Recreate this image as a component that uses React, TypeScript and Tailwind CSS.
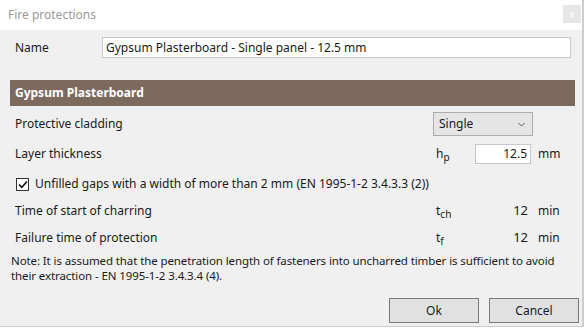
import React from "react";

const font = { fontFamily: '"Noto Sans", "Open Sans", sans-serif' };

function Sym({ base, sub }: { base: string; sub: string }) {
  return (
    <span className="text-[12px] text-[#1a1a1a]">
      {base}
      <span className="relative top-[3px] text-[10px]">{sub}</span>
    </span>
  );
}

export default function App() {
  return (
    <div className="w-[586px] h-[328px] bg-white overflow-hidden" style={font}>
      <div className="w-[584px] h-[327px] bg-[#f0f0f0] border-r-[2px] border-b border-[#cdcdcd] flex flex-col text-[12px] text-[#1a1a1a]">
        {/* Title bar */}
        <div className="h-[30px] bg-white flex items-center justify-between pl-[8px] pr-[1px]">
          <span className="text-[12px] text-[#9a9a9a]">Fire protections</span>
          <div className="w-[18px] h-[18px] bg-[#e6e6e6] flex items-center justify-center text-white text-[10px] leading-none mb-[2px]">
            x
          </div>
        </div>

        {/* Name */}
        <div className="mt-[7px] h-[21px] flex items-center pl-[15px] pr-[11px]">
          <span className="w-[87px]">Name</span>
          <div className="flex-1 h-[21px] bg-white border border-[#c8c8c8] flex items-center pl-[3px]">
            Gypsum Plasterboard - Single panel - 12.5 mm
          </div>
        </div>

        {/* Section header */}
        <div className="mt-[22px] mx-[10px] mr-[7px] h-[26px] bg-[#7d6a5f] flex items-center pl-[5px]">
          <span className="text-white font-bold text-[12px]">Gypsum Plasterboard</span>
        </div>

        {/* Protective cladding */}
        <div className="mt-[6px] h-[24px] flex items-center pl-[15px]">
          <span className="flex-1">Protective cladding</span>
          <div className="w-[149px] flex">
            <div className="w-[100px] h-[24px] bg-[#e5e5e5] border border-[#adadad] flex items-center justify-between pl-[5px] pr-[7px]">
              <span>Single</span>
              <svg width="7" height="5" viewBox="0 0 7 5">
                <path d="M0.5 1 L3.5 4 L6.5 1" stroke="#555" strokeWidth="1" fill="none" />
              </svg>
            </div>
          </div>
        </div>

        {/* Layer thickness */}
        <div className="mt-[8px] h-[20px] flex items-center pl-[15px]">
          <span className="flex-1">Layer thickness</span>
          <div className="w-[149px] flex items-center">
            <div className="w-[42px] pl-[3px]">
              <Sym base="h" sub="p" />
            </div>
            <div className="w-[56px] h-[20px] bg-white border border-[#c8c8c8] flex items-center justify-end pr-[3px]">
              12.5
            </div>
            <span className="ml-[7px]">mm</span>
          </div>
        </div>

        {/* Checkbox */}
        <div className="mt-[10px] h-[20px] flex items-center pl-[16px]">
          <div className="w-[13px] h-[13px] bg-white border border-[#333] flex items-center justify-center">
            <svg width="10" height="9" viewBox="0 0 10 9">
              <path d="M1 4.5 L3.8 7.3 L9 1.5" stroke="#111" strokeWidth="1.6" fill="none" />
            </svg>
          </div>
          <span className="ml-[6px]">Unfilled gaps with a width of more than 2 mm (EN 1995-1-2 3.4.3.3 (2))</span>
        </div>

        {/* Time of start of charring */}
        <div className="mt-[7px] h-[20px] flex items-center pl-[15px]">
          <span className="flex-1">Time of start of charring</span>
          <div className="w-[149px] flex items-center">
            <div className="w-[42px] pl-[3px]">
              <Sym base="t" sub="ch" />
            </div>
            <div className="w-[56px] text-right pr-[3px] text-[13px]">12</div>
            <span className="ml-[7px]">min</span>
          </div>
        </div>

        {/* Failure time */}
        <div className="mt-[7px] h-[20px] flex items-center pl-[15px]">
          <span className="flex-1">Failure time of protection</span>
          <div className="w-[149px] flex items-center">
            <div className="w-[42px] pl-[3px]">
              <Sym base="t" sub="f" />
            </div>
            <div className="w-[56px] text-right pr-[3px] text-[13px]">12</div>
            <span className="ml-[7px]">min</span>
          </div>
        </div>

        {/* Note */}
        <div className="mt-[5px] pl-[11px] leading-[15px] whitespace-nowrap text-[11.5px] tracking-[-0.1px]">
          Note: It is assumed that the penetration length of fasteners into uncharred timber is sufficient to avoid
          <br />
          their extraction - EN 1995-1-2 3.4.3.4 (4).
        </div>

        {/* Buttons */}
        <div className="mt-[15px] flex justify-end gap-[10px] pr-[3px]">
          <button className="w-[90px] h-[25px] bg-[#e1e1e1] border border-[#7a7a7a] text-[12px]">Ok</button>
          <button className="w-[90px] h-[25px] bg-[#e1e1e1] border border-[#7a7a7a] text-[12px]">Cancel</button>
        </div>
      </div>
    </div>
  );
}
